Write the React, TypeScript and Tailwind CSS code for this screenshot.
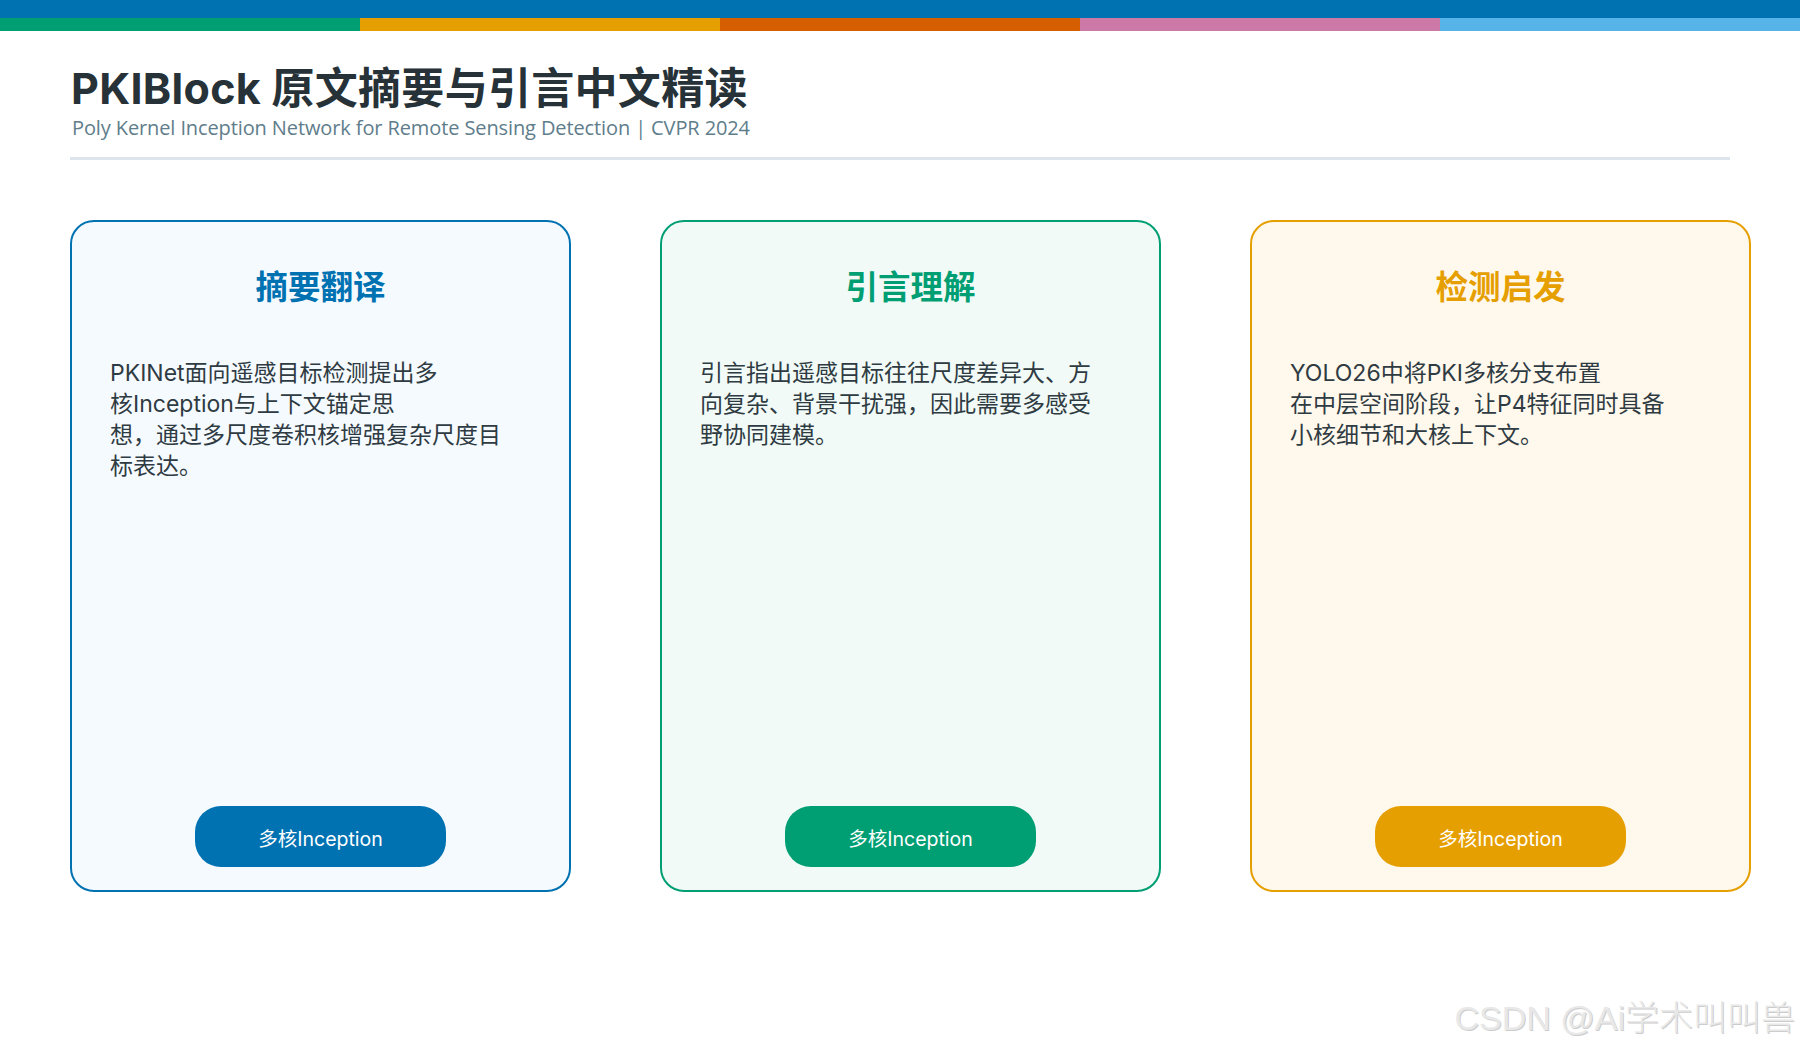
const font = "font-['Inter','Noto_Sans_CJK_SC',sans-serif]";

const segments = ["bg-[#009E73]", "bg-[#E69F00]", "bg-[#D55E00]", "bg-[#CC79A7]", "bg-[#56B4E9]"];

const cards = [
  {
    title: "摘要翻译",
    lines: ["PKINet面向遥感目标检测提出多", "核Inception与上下文锚定思", "想，通过多尺度卷积核增强复杂尺度目", "标表达。"],
    box: "border-[#0072B2] bg-[#F5FAFF]",
    text: "text-[#0072B2]",
    pill: "bg-[#0072B2]",
  },
  {
    title: "引言理解",
    lines: ["引言指出遥感目标往往尺度差异大、方", "向复杂、背景干扰强，因此需要多感受", "野协同建模。"],
    box: "border-[#009E73] bg-[#F1FAF7]",
    text: "text-[#009E73]",
    pill: "bg-[#009E73]",
  },
  {
    title: "检测启发",
    lines: ["YOLO26中将PKI多核分支布置", "在中层空间阶段，让P4特征同时具备", "小核细节和大核上下文。"],
    box: "border-[#E69F00] bg-[#FFF8EC]",
    text: "text-[#E69F00]",
    pill: "bg-[#E69F00]",
  },
];

export default function App() {
  return (
    <main className={`relative w-[1800px] h-[1050px] overflow-hidden bg-white ${font}`}>
      <div className="h-[18px] bg-[#0072B2]" />
      <div className="flex h-[13px]">
        {segments.map((s) => (
          <div key={s} className={`flex-1 ${s}`} />
        ))}
      </div>

      <header className="mx-[70px] h-[129px] border-b-[3px] border-[#DDE4EC] pt-[30px]">
        <h1 className="ml-[1px] text-[43px] leading-[54px] tracking-[0.3px] font-bold text-[#263238] whitespace-nowrap">PKIBlock 原文摘要与引言中文精读</h1>
        <p className="ml-[2px] font-['Open_Sans','Noto_Sans_CJK_SC',sans-serif] text-[20px] leading-[26px] tracking-[-0.11px] text-[#607D8B] whitespace-nowrap">
          Poly Kernel Inception Network for Remote Sensing Detection | CVPR 2024
        </p>
      </header>

      <section className="flex gap-[89px] ml-[70px] mt-[60px]">
        {cards.map((c) => (
          <article key={c.title} className={`flex flex-col shrink-0 w-[501px] h-[672px] rounded-[24px] border-2 px-[38px] ${c.box}`}>
            <h2 className={`mt-[44px] text-center text-[32.5px] leading-[44px] font-bold ${c.text}`}>{c.title}</h2>
            <div className="mt-[48px] text-[23px] leading-[31px] text-[#2F3B42]">
              {c.lines.map((l) => (
                <div key={l} className="whitespace-nowrap">{l}</div>
              ))}
            </div>
            <div className={`mt-auto mb-[23px] self-center w-[251px] h-[61px] rounded-[26px] pt-[7px] flex items-center justify-center text-[19.5px] text-white ${c.pill}`}>
              多核Inception
            </div>
          </article>
        ))}
      </section>

      <div className="absolute right-[5px] bottom-[10px] font-['Liberation_Sans','Noto_Sans_CJK_SC',sans-serif] font-light text-[34px] leading-[44px] text-[#E8E8E8] whitespace-nowrap [text-shadow:1px_1px_0_#CCCCCC]">
        CSDN @Ai学术叫叫兽
      </div>
    </main>
  );
}
